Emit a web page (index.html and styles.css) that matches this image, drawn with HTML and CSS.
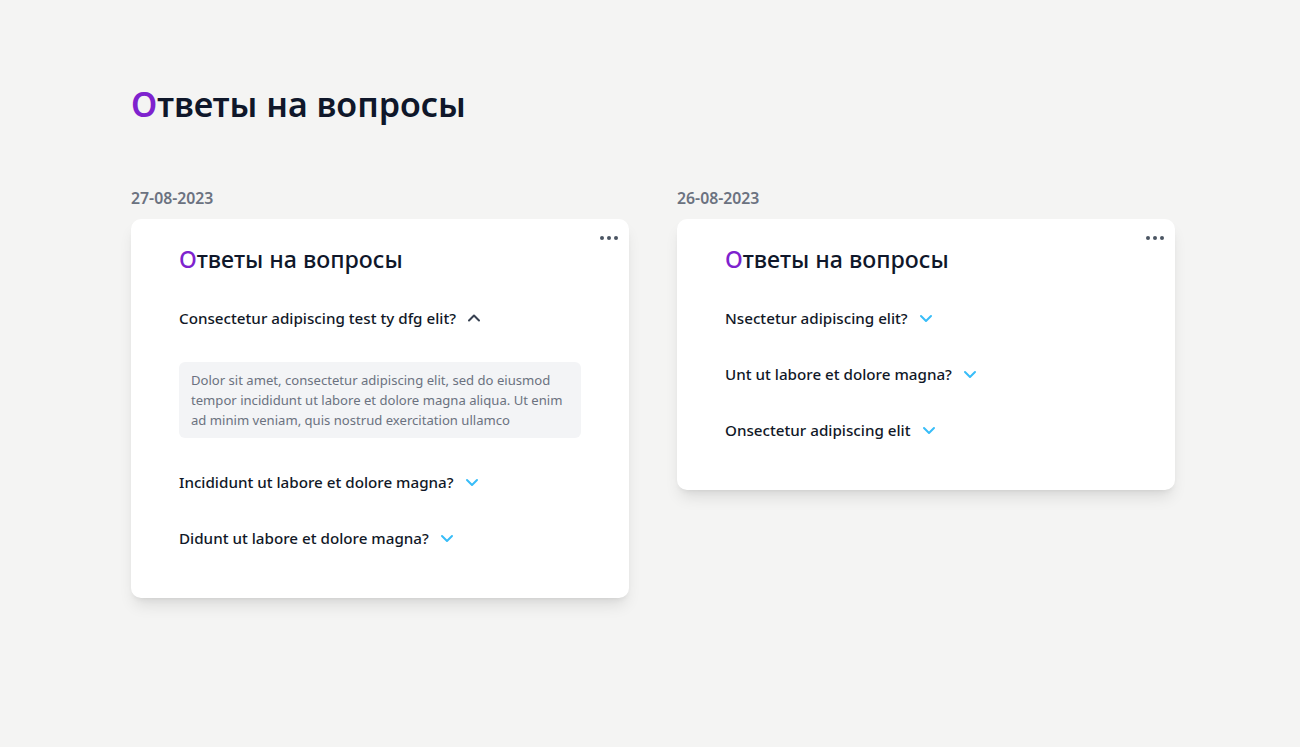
FILE: index.html
```html
<!DOCTYPE html>
<html lang="ru">
<head>
<meta charset="utf-8">
<title>Ответы на вопросы</title>
<link rel="stylesheet" href="styles.css">
</head>
<body>
<main class="page">
  <h1 class="page-title"><span class="accent">О</span>тветы на вопросы</h1>
  <div class="columns">
    <section class="column">
      <div class="date">27-08-2023</div>
      <article class="card">
        <button class="more" aria-label="Ещё">
          <svg width="20" height="6" viewBox="0 0 20 6"><circle cx="3" cy="3" r="2"/><circle cx="10" cy="3" r="2"/><circle cx="17" cy="3" r="2"/></svg>
        </button>
        <h2 class="card-title"><span class="accent">О</span>тветы на вопросы</h2>
        <div class="faq">
          <div class="q open">
            <span>Consectetur adipiscing test ty dfg elit?</span>
            <svg class="chev up" width="14" height="14" viewBox="0 0 14 14"><path d="M2 9.5 L7 4.5 L12 9.5"/></svg>
          </div>
          <div class="answer">Dolor sit amet, consectetur adipiscing elit, sed do eiusmod tempor incididunt ut labore et dolore magna aliqua. Ut enim ad minim veniam, quis nostrud exercitation ullamco</div>
          <div class="q">
            <span>Incididunt ut labore et dolore magna?</span>
            <svg class="chev" width="14" height="14" viewBox="0 0 14 14"><path d="M2 5 L7 10 L12 5"/></svg>
          </div>
          <div class="q">
            <span>Didunt ut labore et dolore magna?</span>
            <svg class="chev" width="14" height="14" viewBox="0 0 14 14"><path d="M2 5 L7 10 L12 5"/></svg>
          </div>
        </div>
      </article>
    </section>
    <section class="column">
      <div class="date">26-08-2023</div>
      <article class="card">
        <button class="more" aria-label="Ещё">
          <svg width="20" height="6" viewBox="0 0 20 6"><circle cx="3" cy="3" r="2"/><circle cx="10" cy="3" r="2"/><circle cx="17" cy="3" r="2"/></svg>
        </button>
        <h2 class="card-title"><span class="accent">О</span>тветы на вопросы</h2>
        <div class="faq">
          <div class="q">
            <span>Nsectetur adipiscing elit?</span>
            <svg class="chev" width="14" height="14" viewBox="0 0 14 14"><path d="M2 5 L7 10 L12 5"/></svg>
          </div>
          <div class="q">
            <span>Unt ut labore et dolore magna?</span>
            <svg class="chev" width="14" height="14" viewBox="0 0 14 14"><path d="M2 5 L7 10 L12 5"/></svg>
          </div>
          <div class="q">
            <span>Onsectetur adipiscing elit</span>
            <svg class="chev" width="14" height="14" viewBox="0 0 14 14"><path d="M2 5 L7 10 L12 5"/></svg>
          </div>
        </div>
      </article>
    </section>
  </div>
</main>
</body>
</html>
```

FILE: styles.css
```css
* { box-sizing: border-box; }
html, body { margin: 0; padding: 0; }
body {
  background: #f4f4f3;
  font-family: "Noto Sans", "Open Sans", sans-serif;
  color: #111827;
  width: 1300px;
  height: 747px;
  overflow: hidden;
}
.page {
  padding: 84px 0 0 131px;
}
.page-title {
  margin: 0;
  font-size: 34px;
  line-height: 40px;
  font-weight: 600;
  color: #0f172a;
}
.accent { color: #7e22ce; }
.columns {
  display: grid;
  grid-template-columns: 498px 498px;
  column-gap: 48px;
  align-items: start;
  margin-top: 64px;
}
.date {
  font-size: 15.8px;
  line-height: 20px;
  font-weight: 600;
  color: #6b7280;
  margin-bottom: 11px;
}
.card {
  position: relative;
  background: #fff;
  border-radius: 10px;
  padding: 24px 48px 48px;
  box-shadow: 0 10px 15px -3px rgba(0,0,0,0.1), 0 4px 6px -4px rgba(0,0,0,0.1);
}
.more {
  position: absolute;
  top: 16px;
  right: 10px;
  border: 0;
  background: none;
  padding: 0;
  line-height: 0;
  fill: #4b5563;
}
.card-title {
  margin: 0;
  font-size: 23.2px;
  line-height: 32px;
  font-weight: 500;
  color: #0f172a;
}
.faq {
  display: flex;
  flex-direction: column;
  gap: 32px;
  margin-top: 31px;
}
.q {
  display: flex;
  align-items: center;
  gap: 11px;
  font-size: 15.2px;
  line-height: 24px;
  font-weight: 500;
  color: #111827;
}
.chev {
  fill: none;
  stroke: #38bdf8;
  stroke-width: 2;
  stroke-linecap: round;
  stroke-linejoin: round;
}
.chev.up { stroke: #374151; }
.answer {
  background: #f3f4f6;
  border-radius: 6px;
  padding: 8px 12px;
  font-size: 13.1px;
  line-height: 20px;
  color: #6b7280;
}
```
